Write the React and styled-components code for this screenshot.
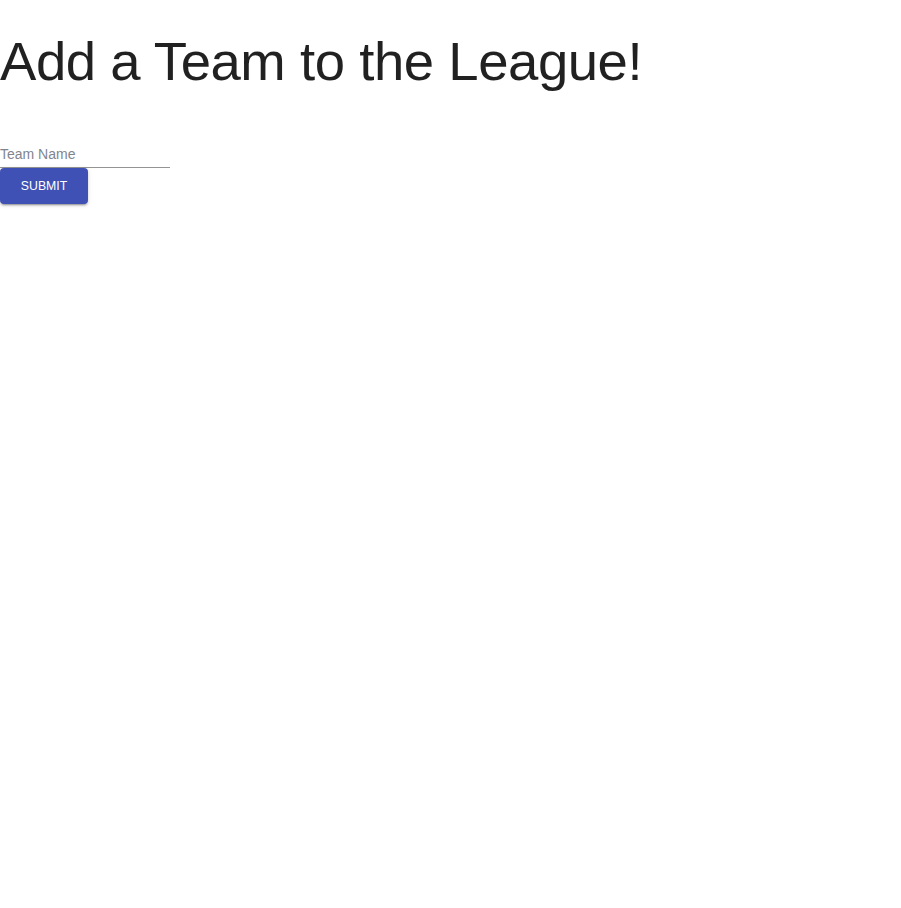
import React from "react";
import styled, { createGlobalStyle } from "styled-components";

const Global = createGlobalStyle`
  html, body { margin: 0; padding: 0; background: #fff; }
  body { font-family: "Liberation Sans", Arial, sans-serif; }
`;

const Page = styled.div`
  min-height: calc(100vh + 24px);
  padding-top: 29px;
  box-sizing: border-box;
`;

const Title = styled.h1`
  margin: 0;
  font-family: "Liberation Sans", Arial, sans-serif;
  font-weight: 400;
  font-size: 54.5px;
  line-height: 65px;
  letter-spacing: -0.00833em;
  color: rgba(0, 0, 0, 0.87);
`;

const Form = styled.form`
  display: flex;
  flex-direction: column;
  align-items: flex-start;
  margin-top: 43px;
`;

const Field = styled.div`
  width: 170px;
  border-bottom: 1px solid rgba(0, 0, 0, 0.42);
`;

const Input = styled.input`
  display: block;
  width: 100%;
  box-sizing: content-box;
  border: 0;
  outline: 0;
  margin: 0;
  padding: 9px 0 4px;
  height: 17px;
  line-height: 17px;
  background: transparent;
  font-family: "Liberation Sans", Arial, sans-serif;
  font-size: 14px;
  color: rgba(0, 0, 0, 0.87);
  &::placeholder { color: #7f8590; opacity: 1; }
`;

const Button = styled.button`
  width: 88px;
  height: 36px;
  padding: 0;
  border: 0;
  border-radius: 4px;
  background: #3f51b5;
  color: #fff;
  font-family: "Liberation Sans", Arial, sans-serif;
  font-size: 12.25px;
  font-weight: 400;
  letter-spacing: 0;
  text-transform: uppercase;
  cursor: pointer;
  box-shadow: 0px 3px 1px -2px rgba(0,0,0,0.2), 0px 2px 2px 0px rgba(0,0,0,0.14), 0px 1px 5px 0px rgba(0,0,0,0.12);
`;

export default function App() {
  return (
    <Page>
      <Global />
      <Title>Add a Team to the League!</Title>
      <Form onSubmit={(e) => e.preventDefault()}>
        <Field>
          <Input placeholder="Team Name" />
        </Field>
        <Button type="submit">Submit</Button>
      </Form>
    </Page>
  );
}
